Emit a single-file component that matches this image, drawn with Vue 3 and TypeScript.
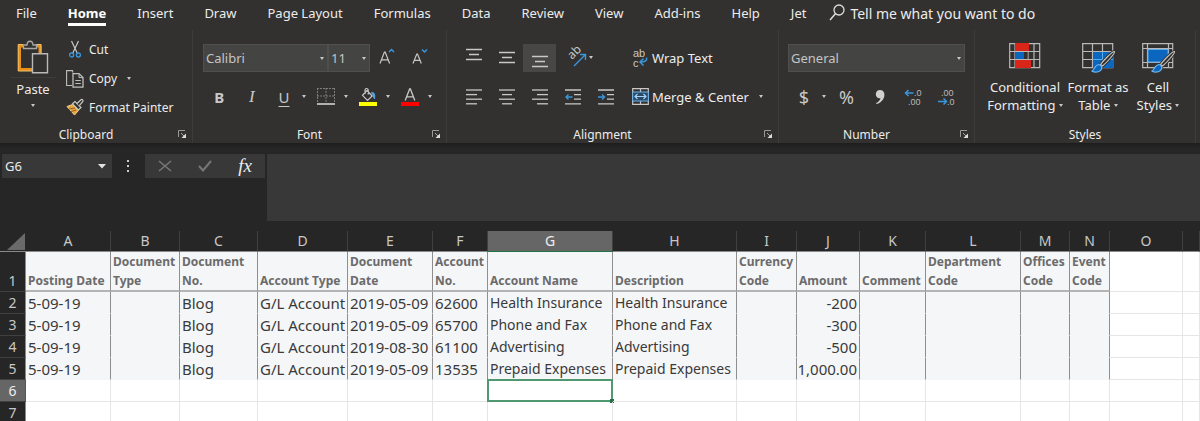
<script setup lang="ts">
import { ref } from 'vue'

const tabs = ['File', 'Home', 'Insert', 'Draw', 'Page Layout', 'Formulas', 'Data', 'Review', 'View', 'Add-ins', 'Help', 'Jet']
const activeTab = ref('Home')
const fontName = ref('Calibri')
const fontSize = ref('11')
const numberFormat = ref('General')
const cellName = ref('G6')
const formula = ref('')

interface Column { id: string; title: string; width: number }
const columns: Column[] = [
  { id: 'A', title: 'Posting Date', width: 85 },
  { id: 'B', title: 'Document Type', width: 69 },
  { id: 'C', title: 'Document No.', width: 78 },
  { id: 'D', title: 'Account Type', width: 90 },
  { id: 'E', title: 'Document Date', width: 85 },
  { id: 'F', title: 'Account No.', width: 55 },
  { id: 'G', title: 'Account Name', width: 125 },
  { id: 'H', title: 'Description', width: 124 },
  { id: 'I', title: 'Currency Code', width: 60 },
  { id: 'J', title: 'Amount', width: 63 },
  { id: 'K', title: 'Comment', width: 66 },
  { id: 'L', title: 'Department Code', width: 95 },
  { id: 'M', title: 'Offices Code', width: 49 },
  { id: 'N', title: 'Event Code', width: 40 },
  { id: 'O', title: '', width: 73 },
  { id: '', title: '', width: 17 },
]
const dataColumns = 14

const entry = (date: string, no: string, name: string, amount: string): string[] =>
  ['5-09-19', '', 'Blog', 'G/L Account', date, no, name, name, '', amount, '', '', '', '', '', '']
const rows: string[][] = [
  entry('2019-05-09', '62600', 'Health Insurance', '-200'),
  entry('2019-05-09', '65700', 'Phone and Fax', '-300'),
  entry('2019-08-30', '61100', 'Advertising', '-500'),
  entry('2019-05-09', '13535', 'Prepaid Expenses', '1,000.00'),
]
const emptyRows = [6, 7]

const cellClass = (i: number) => ({
  filled: i < dataColumns,
  amount: columns[i].id === 'J',
  name: columns[i].id === 'G' || columns[i].id === 'H',
})

const alignLines: Record<string, number[][]> = {
  left: [[0, 16], [0, 11], [0, 16], [0, 11]],
  center: [[0, 16], [3, 13], [0, 16], [3, 13]],
  right: [[0, 16], [5, 16], [0, 16], [5, 16]],
}
const verticals = [
  { label: 'Top Align', top: 1 },
  { label: 'Middle Align', top: 4 },
  { label: 'Bottom Align', top: 8 },
]
</script>

<template>
  <main class="app">
    <header class="ribbon">
      <nav class="tabs" aria-label="Ribbon tabs">
        <button v-for="t in tabs" :key="t" class="tab" :class="{ active: t === activeTab }" @click="activeTab = t">{{ t }}</button>
        <button class="tell">
          <svg width="17" height="18" viewBox="0 0 17 18" fill="none" stroke="#ddd"><circle cx="10" cy="6" r="5" stroke-width="1.3" /><path d="M6.4 9.8 1 16" stroke-width="1.5" /></svg>
          Tell me what you want to do
        </button>
      </nav>

      <div class="groups">
        <section class="group">
          <div class="body clipboard">
            <button class="paste">
              <svg width="32" height="34" viewBox="0 0 32 34" fill="none">
                <path d="M6 6H2.5V29.5H15M19 6h4v7" stroke="#e8921c" stroke-width="3" />
                <path d="M6 4.500H1.200V31H15M19 4.500h5V13" stroke="#f3c069" />
                <path d="M6.500 8.500V5H10c.3-5 5.700-5 6 0h3.500v3.500z" stroke="#a8a8a8" stroke-width="1.3" fill="#32312f" />
                <path d="M15.500 13.800h15v19h-15z" stroke="#b9b9b9" stroke-width="1.4" fill="#32312f" />
              </svg>
              <span class="paste-label">Paste</span>
              <i class="caret"></i>
            </button>
            <div class="clip-list">
              <button class="clip">
                <span class="clip-icon"><svg width="12" height="17" viewBox="0 0 12 17" fill="none"><path d="M2.500 0 8.200 12M9.500 0 3.800 12" stroke="#c8c8c8" stroke-width="1.2" /><circle cx="2.600" cy="14" r="2" stroke="#3a96dd" stroke-width="1.3" /><circle cx="9.400" cy="14" r="2" stroke="#3a96dd" stroke-width="1.3" /></svg></span>
                Cut
              </button>
              <button class="clip">
                <span class="clip-icon"><svg width="18" height="18" viewBox="0 0 18 18" fill="none" stroke="#bdbdbd"><path d="M6 15.500H.6V.6H6.500L7 2.500" stroke-width="1.1" /><path d="M7 3.600h6l4 4v9.500H7z" stroke-width="1.300" /><path d="M13 3.600v4h4M9.300 10.500h5.500M9.300 13.500h5.500" /></svg></span>
                Copy <i class="caret far"></i>
              </button>
              <button class="clip">
                <span class="clip-icon"><svg width="18" height="17" viewBox="0 0 18 17" fill="none"><path d="M1 7.500 6.500 5.500 12.500 11.500 8.500 16z" fill="#e9a540" stroke="#f6d28f" /><path d="M3 10 9 9M5 12.500l5-1.500" stroke="#7a4d08" stroke-width=".8" /><path d="M6.500 4.800 9 2.500l6 6-2.500 2.400z" fill="#32312f" stroke="#c8c8c8" stroke-width="1.200" /><path d="M11 4.500 15 .7c1-.8 2.700.8 1.800 1.900L13.300 6.700" stroke="#c8c8c8" stroke-width="1.200" fill="#32312f" /></svg></span>
                Format Painter
              </button>
            </div>
          </div>
          <footer class="foot"><span>Clipboard</span><button class="launch" aria-label="Clipboard settings"><svg width="9" height="9" viewBox="0 0 9 9"><path d="M.5 7V.5H7" fill="none" stroke="#999" /><path d="M3 3 6 6" stroke="#aaa" /><path d="M8 3.500V8H3.500z" fill="#ddd" /></svg></button></footer>
        </section>

        <section class="group">
          <div class="body stacked font">
            <div class="line">
              <span class="pick grow"><select v-model="fontName" aria-label="Font"><option>Calibri</option></select><i class="caret"></i></span>
              <span class="pick size"><select v-model="fontSize" aria-label="Font size"><option>11</option></select><i class="caret"></i></span>
              <button class="tool" aria-label="Increase font size"><svg width="16" height="18" viewBox="0 0 16 18" fill="none"><path d="M1 14.500 5.400 3h.8L10.600 14.500M2.600 10.800H9" stroke="#c8c8c8" stroke-width="1.200" /><path d="M10 3 12.500 .5 15 3" stroke="#3a96dd" stroke-width="1.500" /></svg></button>
              <button class="tool" aria-label="Decrease font size"><svg width="16" height="18" viewBox="0 0 16 18" fill="none"><path d="M1 14.500 4.800 5h.7L9.300 14.500M2.500 11.300H8" stroke="#c8c8c8" stroke-width="1.200" /><path d="M10 .5 12.500 3 15 .5" stroke="#3a96dd" stroke-width="1.500" /></svg></button>
            </div>
            <div class="line">
              <button class="tool bold">B</button>
              <button class="tool italic">I</button>
              <button class="split" aria-label="Underline"><span class="glyph under">U</span><i class="caret"></i></button>
              <button class="split" aria-label="Borders"><span class="glyph"><svg width="18" height="17" viewBox="0 0 18 17" fill="none"><path d="M.5 0v15M9 0v15M17.500 0v15M0 .5h18M0 8h18" stroke="#7c7c7c" stroke-dasharray="2 1" /><path d="M0 16h18" stroke="#ddd" stroke-width="1.500" /></svg></span><i class="caret"></i></button>
              <button class="split" aria-label="Fill color"><span class="glyph"><svg width="18" height="18" viewBox="0 0 18 18" fill="none"><path d="M8 2.500 13.200 8 8.500 12.500 3.500 7.300zM6 6V2.200C6 0 9.200 0 9.200 2v4.500" stroke="#c8c8c8" stroke-width="1.200" /><path d="M12.500 4.500C16 4.500 16 7 15.500 11 14 8.500 14.500 7 12.500 4.500z" fill="#58a8e8" stroke="#58a8e8" /><path fill="#ff0" d="M0 14h18v4H0z" /></svg></span><i class="caret"></i></button>
              <button class="split" aria-label="Font color"><span class="glyph"><svg width="18" height="18" viewBox="0 0 18 18" fill="none"><path d="M4.200 12.500 8.600 1h.8l4.400 11.500M5.800 8.800h6.400" stroke="#c8c8c8" stroke-width="1.300" /><path fill="#f00" d="M0 14h18v4H0z" /></svg></span><i class="caret"></i></button>
            </div>
          </div>
          <footer class="foot"><span>Font</span><button class="launch" aria-label="Font settings"><svg width="9" height="9" viewBox="0 0 9 9"><path d="M.5 7V.5H7" fill="none" stroke="#999" /><path d="M3 3 6 6" stroke="#aaa" /><path d="M8 3.500V8H3.500z" fill="#ddd" /></svg></button></footer>
        </section>

        <section class="group">
          <div class="body stacked alignment">
            <div class="line">
              <button v-for="(v, i) in verticals" :key="v.label" class="tool" :class="{ pressed: i === 2 }" :aria-label="v.label">
                <svg width="16" height="20" viewBox="0 0 16 20" stroke="#c8c8c8" stroke-width="1.300"><path :d="`M0 ${v.top + .5}h16M3 ${v.top + 5.5}h10M0 ${v.top + 10.5}h16`" /></svg>
              </button>
              <button class="tool angle" aria-label="Orientation"><svg width="18" height="20" viewBox="0 0 18 20" fill="none"><text x="4" y="12" transform="rotate(-45 4 12)" font-size="12" fill="#c8c8c8">ab</text><path d="M6 18 17 7M12 6.500h5.500V12" stroke="#3a96dd" stroke-width="1.400" /></svg><i class="caret"></i></button>
              <span></span>
              <button class="wide"><span class="wide-icon"><svg width="16" height="18" viewBox="0 0 16 18" fill="none"><text class="mini" x="1" y="8" font-size="11" fill="#c8c8c8">ab</text><text class="mini" x="1" y="18" font-size="11" fill="#c8c8c8">c</text><path d="M14.500 8.500c1 3-1.500 4.500-6 4.500M11.500 9.500 8 13l3.500 3.500" stroke="#3a96dd" stroke-width="1.500" /></svg></span>Wrap Text</button>
            </div>
            <div class="line">
              <button v-for="(lines, name) in alignLines" :key="name" class="tool" :aria-label="`Align ${name}`">
                <svg width="16" height="16" viewBox="0 0 16 16" stroke="#c8c8c8" stroke-width="1.300"><path v-for="(l, i) in lines" :key="i" :d="`M${l[0]} ${i * 4.6 + 1}H${l[1]}`" /></svg>
              </button>
              <button class="tool" aria-label="Decrease indent"><svg width="16" height="16" viewBox="0 0 16 16" fill="none"><path d="M0 1h16M9 5.600h7M9 10.200h7M0 14.800h16" stroke="#c8c8c8" stroke-width="1.300" /><path d="M7.500 8H1M3.500 5.500 1 8l2.500 2.500" stroke="#3a96dd" stroke-width="1.400" /></svg></button>
              <button class="tool" aria-label="Increase indent"><svg width="16" height="16" viewBox="0 0 16 16" fill="none"><path d="M0 1h16M9 5.600h7M9 10.200h7M0 14.800h16" stroke="#c8c8c8" stroke-width="1.300" /><path d="M0 8h6.500M4 5.500 6.500 8 4 10.500" stroke="#3a96dd" stroke-width="1.400" /></svg></button>
              <button class="wide"><span class="wide-icon"><svg width="17" height="17" viewBox="0 0 17 17" fill="none"><path d="M.7.7h15.600v15.600H.7zM8.500.7V4M8.500 13v3.300" stroke="#c8c8c8" stroke-width="1.200" /><path d="M.7 4h15.600v9H.7z" fill="#274a68" stroke="#6db4ec" /><path d="M3 8.500h11M5.500 6 3 8.500 5.500 11M11.500 6 14 8.500 11.500 11" stroke="#a6d2f5" stroke-width="1.200" /></svg></span>Merge &amp; Center <i class="caret far"></i></button>
            </div>
          </div>
          <footer class="foot"><span>Alignment</span><button class="launch" aria-label="Alignment settings"><svg width="9" height="9" viewBox="0 0 9 9"><path d="M.5 7V.5H7" fill="none" stroke="#999" /><path d="M3 3 6 6" stroke="#aaa" /><path d="M8 3.500V8H3.500z" fill="#ddd" /></svg></button></footer>
        </section>

        <section class="group">
          <div class="body stacked number">
            <div class="line">
              <span class="pick grow"><select v-model="numberFormat" aria-label="Number format"><option>General</option></select><i class="caret"></i></span>
            </div>
            <div class="line">
              <button class="split" aria-label="Accounting format"><span class="glyph big">$</span><i class="caret"></i></button>
              <button class="tool big">%</button>
              <button class="tool" aria-label="Comma style"><svg width="10" height="16" viewBox="0 0 10 16"><path d="M5 1c5 0 5.500 6 3 9.500C6.500 12.800 4 14.500 1.500 15l-.4-1C3.500 13 5 11.500 5.500 9 3 9.800.8 8 .8 5.200.8 2.500 2.800 1 5 1z" fill="#d0d0d0" /></svg></button>
              <button class="tool" aria-label="Increase decimal"><svg width="18" height="18" viewBox="0 0 18 18" fill="none"><text class="mini" x="10" y="8" font-size="9" fill="#bbb">.0</text><text class="mini" x="4" y="17" font-size="9" fill="#bbb">.00</text><path d="M9.500 5H1.500M4.500 2 1.500 5l3 3" stroke="#3a96dd" stroke-width="1.500" /></svg></button>
              <button class="tool" aria-label="Decrease decimal"><svg width="18" height="18" viewBox="0 0 18 18" fill="none"><text class="mini" x="4" y="8" font-size="9" fill="#bbb">.00</text><text class="mini" x="10" y="17" font-size="9" fill="#bbb">.0</text><path d="M1 13.500h8.500M6.500 10.500l3 3-3 3" stroke="#3a96dd" stroke-width="1.500" /></svg></button>
            </div>
          </div>
          <footer class="foot"><span>Number</span><button class="launch" aria-label="Number settings"><svg width="9" height="9" viewBox="0 0 9 9"><path d="M.5 7V.5H7" fill="none" stroke="#999" /><path d="M3 3 6 6" stroke="#aaa" /><path d="M8 3.500V8H3.500z" fill="#ddd" /></svg></button></footer>
        </section>

        <section class="group">
          <div class="body styles">
            <button class="style wide-1">
              <svg width="34" height="31" viewBox="0 0 34 31" fill="none"><path d="M1.700 1.700h30v24h-30zM7 2v24M20 2v24M26 2v24M2 9.500h30M2 17.500h30" stroke="#b9b9b9" stroke-width="1.200" /><path fill="#d92618" d="M7 1h14v8H7zM7 18h16v8H7z" /><path fill="#0a66bf" d="M7 10h9v7H7z" /><path d="M16.500 10h3v7h-3z" fill="#32312f" /></svg>
              <span>Conditional<br />Formatting <i class="caret"></i></span>
            </button>
            <button class="style wide-2">
              <svg width="34" height="31" viewBox="0 0 34 31" fill="none"><path d="M1.700 1.700h30v24h-30zM11.500 2v24M21.500 2v24M2 9.500h30M2 17.500h30" stroke="#b9b9b9" stroke-width="1.200" /><path fill="#0a66bf" d="M12 10h20v16H12z" /><path d="M21.500 10v16M12 17.500h20" stroke="#5daae8" /><path d="M33.500 9.500c-2-.5-11.500 9.500-14 13l2 1.500C24 22 34.500 11.500 33.500 9.500z" fill="#32312f" stroke="#32312f" stroke-width="3" /><path d="M33.500 9.500c-2-.5-11.500 9.500-14 13l2 1.500C24 22 34.500 11.500 33.500 9.500z" fill="#32312f" stroke="#c8c8c8" stroke-width="1.100" /><path d="M10.500 29c3 0 2.500-6 7.500-6.500 3 .5 3.500 4 1.500 6-2.500 2-6 2-9 .5z" fill="#0a66bf" stroke="#6db4ec" stroke-width="1.200" /></svg>
              <span>Format as<br />Table <i class="caret"></i></span>
            </button>
            <button class="style wide-3">
              <svg width="34" height="31" viewBox="0 0 34 31" fill="none"><path d="M1.700 1.700h30v24h-30zM6.500 2v24M27.500 2v24M2 6.500h30M2 20.500h30" stroke="#b9b9b9" stroke-width="1.200" /><path d="M7 7.500h20V20H7z" fill="#0a66bf" stroke="#5daae8" /><path d="M33.500 9.500c-2-.5-11.500 9.500-14 13l2 1.500C24 22 34.500 11.500 33.500 9.500z" fill="#32312f" stroke="#32312f" stroke-width="3" /><path d="M33.500 9.500c-2-.5-11.500 9.500-14 13l2 1.500C24 22 34.500 11.500 33.500 9.500z" fill="#32312f" stroke="#c8c8c8" stroke-width="1.100" /><path d="M10.500 29c3 0 2.500-6 7.500-6.500 3 .5 3.500 4 1.500 6-2.500 2-6 2-9 .5z" fill="#0a66bf" stroke="#6db4ec" stroke-width="1.200" /></svg>
              <span>Cell<br />Styles <i class="caret"></i></span>
            </button>
          </div>
          <footer class="foot"><span>Styles</span></footer>
        </section>
      </div>
    </header>

    <section class="formula-bar">
      <div class="name-box">
        <input v-model="cellName" aria-label="Name box" />
        <button aria-label="Show names"><svg width="8" height="5" viewBox="0 0 8 5"><path d="M0 0h8L4 4.500z" fill="#e4e4e4" /></svg></button>
      </div>
      <svg class="dots" width="4" height="12" viewBox="0 0 4 12" fill="#ccc"><path d="M1 0h2v2H1zM1 5h2v2H1zM1 10h2v2H1z" /></svg>
      <div class="edit">
        <button aria-label="Cancel"><svg width="14" height="12" viewBox="0 0 14 12"><path d="m1 1 12 10M13 1 1 11" stroke="#777" stroke-width="1.600" /></svg></button>
        <button aria-label="Enter"><svg width="14" height="12" viewBox="0 0 14 12" fill="none"><path d="m1 6 4 4.500L13 1" stroke="#777" stroke-width="2" /></svg></button>
        <button class="fx">fx</button>
      </div>
      <textarea v-model="formula" class="formula" aria-label="Formula"></textarea>
    </section>

    <table class="sheet">
      <colgroup>
        <col style="width: 26px" />
        <col v-for="c in columns" :key="c.id" :style="{ width: c.width + 'px' }" />
      </colgroup>
      <thead>
        <tr>
          <th class="corner"><svg width="18" height="17" viewBox="0 0 18 17"><path d="M18 0v17H0z" fill="#6a6a6a" /></svg></th>
          <th v-for="c in columns" :key="c.id" class="letter" :class="{ chosen: c.id === 'G' }" scope="col">{{ c.id }}</th>
        </tr>
      </thead>
      <tbody>
        <tr class="titles">
          <th class="index" scope="row">1</th>
          <td v-for="(c, i) in columns" :key="c.id" :class="{ filled: i < dataColumns }">{{ c.title }}</td>
        </tr>
        <tr v-for="(row, r) in rows" :key="r">
          <th class="index" scope="row">{{ r + 2 }}</th>
          <td v-for="(value, i) in row" :key="i" :class="cellClass(i)">{{ value }}</td>
        </tr>
        <tr v-for="n in emptyRows" :key="n">
          <th class="index" :class="{ chosen: n === 6 }" scope="row">{{ n }}</th>
          <td v-for="c in columns" :key="c.id" :class="{ cursor: n === 6 && c.id === 'G' }"></td>
        </tr>
      </tbody>
    </table>
  </main>
</template>

<style>
body { background: #262626; }
</style>

<style scoped>
* { box-sizing: border-box; }
.app { height: 100vh; overflow: hidden; background: #262626; color: #ececec; font-family: "Noto Sans", "Open Sans", sans-serif; font-size: 13px; }
button, input, select, textarea { margin: 0; padding: 0; border: 0; border-radius: 0; background: none; color: inherit; font: inherit; outline: 0; }
svg { display: block; flex: none; overflow: visible; }
.mini { font-family: "Liberation Sans", sans-serif; }
.ribbon { background: #32312f; }
.tabs { display: flex; gap: 31px; height: 30px; padding: 0 16px; }
.tab { height: 26px; white-space: nowrap; }
.tab.active { font-weight: 700; color: #fff; border-bottom: 3px solid #fff; padding-top: 3px; }
.tell { display: flex; align-items: center; gap: 4px; height: 26px; margin-left: -8px; font-size: 14px; white-space: nowrap; }

.groups { display: grid; grid-template-columns: 193fr 254fr 332fr 196fr 221fr 4fr; height: 113px; }
.group { display: flex; flex-direction: column; min-width: 0; border-right: 1px solid #3d3c3a; }
.body { display: flex; flex: 1; }
.foot { display: flex; align-items: center; height: 16px; margin-bottom: 1px; font-size: 12px; }
.foot span { flex: 1; text-align: center; }
.launch { width: 20px; height: 9px; }
.launch svg { margin: 0 auto; }
.caret { display: inline-block; flex: none; width: 0; height: 0; border: 2px solid transparent; border-top: 3px solid #c8c8c8; border-bottom: 0; }
.caret.far { margin-left: 10px; }

.clipboard { padding: 5px 0 0 10px; }
.paste { display: flex; flex-direction: column; align-items: center; align-self: flex-start; width: 46px; padding-top: 5px; }
.paste-label { width: 100%; margin: 3px 0 6px; padding-top: 2px; border-top: 1px solid #3d3c3a; line-height: 18px; }
.clip-list { display: flex; flex-direction: column; padding-left: 9px; }
.clip { display: flex; align-items: center; gap: 4px; height: 29px; font-size: 12px; white-space: nowrap; }
.clip .caret { margin-left: 6px; }
.clip-icon { display: flex; justify-content: center; width: 20px; }

.stacked { flex-direction: column; padding: 8px 10px 0; }
.line { display: flex; align-items: center; height: 39px; }
.pick { display: flex; position: relative; height: 28px; background: #444443; border: 1px solid #504f4e; color: #c4c4c4; }
.pick select { width: 100%; appearance: none; padding-left: 2px; }
.pick .caret { position: absolute; right: 3px; top: 12px; pointer-events: none; }
.grow { flex: 1; }
.size { width: 42px; }
.tool { display: flex; align-items: center; justify-content: center; width: 33px; height: 28px; color: #c8c8c8; }
.split { display: flex; align-items: center; height: 28px; color: #c8c8c8; }
.glyph { display: flex; justify-content: center; width: 32px; }
.split .caret { margin: 0 4px 0 2px; }
.bold { font-size: 15px; font-weight: 700; }
.italic { font: italic 17px "Liberation Serif", serif; }
.under { font-size: 15px; text-decoration: underline; text-underline-offset: 3px; }
.big { font-size: 18px; }
.alignment .line { display: grid; grid-template-columns: repeat(5, 33px) 1fr; }
.pressed { background: #484746; }
.tool.angle { gap: 3px; width: 37px; justify-content: flex-end; }
.wide { display: flex; align-items: center; padding-left: 6px; white-space: nowrap; }
.wide-icon { display: flex; justify-content: center; width: 24px; }
.number { padding: 8px 9px 0; }

.styles { justify-content: center; padding-top: 12px; }
.style { display: flex; flex-direction: column; align-items: center; align-self: flex-start; gap: 5px; white-space: nowrap; line-height: 18px; }
.style .caret { vertical-align: middle; margin-bottom: 3px; }
.wide-1 { width: 80px; }
.wide-2 { width: 66px; }
.wide-3 { width: 54px; }

.formula-bar { display: flex; align-items: flex-start; height: 88px; padding: 11px 0 10px 2px; background: linear-gradient(#1d1d1d, #262626 6px); }
.name-box { display: flex; align-items: center; width: 110px; height: 24px; padding: 0 6px 0 3px; background: #383838; }
.name-box input { flex: 1; min-width: 0; }
.dots { margin: 6px 15px 0 14px; }
.edit { display: flex; width: 120px; height: 24px; background: #383838; }
.edit button { display: flex; flex: 1; align-items: center; justify-content: center; }
.edit .fx { font: italic 19px "Liberation Serif", serif; }
.formula { flex: 1; height: 67px; margin-left: 2px; background: #383838; resize: none; }

.sheet { width: 100%; table-layout: fixed; border-collapse: separate; border-spacing: 0; background: #fff; color: #3a3a3a; }
.sheet th, .sheet td { height: 22px; padding: 0 2px; font-weight: 400; line-height: 20px; }
.sheet thead th { height: 21px; padding: 0; background: #262626; border-bottom: 1px solid #8a8a8a; color: #c8c8c8; font-size: 14px; line-height: 20px; }
.sheet .letter { border-right: 1px solid #404040; }
.sheet thead .letter.chosen { background: #666; border-bottom-color: #217346; color: #eee; }
.corner svg { margin-left: 7px; }
.sheet .index { padding: 0; background: #262626; border-right: 1px solid #8a8a8a; border-bottom: 1px solid #404040; color: #c8c8c8; font-size: 14px; text-align: center; vertical-align: bottom; }
.sheet .index.chosen { background: #666; border-right-color: #217346; color: #eee; }
.sheet td { position: relative; border-right: 1px solid #e6e6e6; border-bottom: 1px solid #e6e6e6; font-size: 15px; white-space: nowrap; }
.sheet td.filled { background: #f5f6f8; border-right-color: #8e8e8e; border-bottom-color: #f5f6f8; }
.sheet td.name { font-size: 14px; }
.sheet td.amount { padding-left: 0; text-align: right; }
.sheet .titles td, .sheet .titles th { height: 40px; vertical-align: bottom; }
.sheet .titles td { padding-right: 0; font-size: 12px; font-weight: 700; line-height: 19px; color: #6b6b6b; white-space: normal; }
.sheet .titles td.filled { border-bottom: 2px solid #b4b4b4; }
.cursor::before { content: ""; position: absolute; inset: -1px; border: 2px solid #4f9870; }
.cursor::after { content: ""; position: absolute; right: -2px; bottom: -2px; width: 4px; height: 4px; background: #217346; }
</style>
